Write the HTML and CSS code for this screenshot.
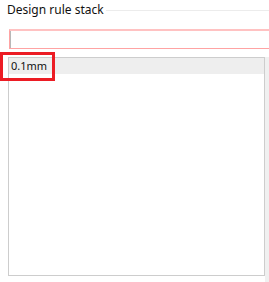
FILE: index.html
```html
<!DOCTYPE html>
<html>
<head>
<meta charset="utf-8">
<link rel="stylesheet" href="styles.css">
</head>
<body>
<div class="group">
  <div class="legend"><span class="title">Design rule stack</span><span class="rule"></span></div>
  <div class="field-wrap"><input class="field" type="text"></div>
  <div class="list-wrap">
    <div class="list">
      <div class="item">0.1mm</div>
    </div>
    <div class="scroll"></div>
  </div>
  <div class="highlight"></div>
</div>
</body>
</html>
```
FILE: styles.css
```css
html, body {
  margin: 0;
  padding: 0;
  background: #ffffff;
  overflow: hidden;
}
.group {
  position: relative;
  width: 269px;
  height: 282px;
  overflow: hidden;
  font-family: "Segoe UI", "Noto Sans", "Open Sans", sans-serif;
  color: #111111;
}
.legend {
  display: flex;
  align-items: center;
  height: 20px;
}
.title {
  padding-left: 7px;
  padding-right: 2px;
  font-size: 12px;
  line-height: 20px;
  white-space: nowrap;
}
.rule {
  flex: 1;
  border-top: 1px solid #ececec;
}
.field-wrap {
  margin-top: 9px;
  padding-left: 9px;
  overflow: hidden;
}
.field {
  display: block;
  box-sizing: border-box;
  width: calc(100% + 4px);
  height: 20px;
  padding: 0;
  border: 1px solid #ffa3a3;
  border-top: 2px solid #ffc2c2;
  box-shadow: inset 1px 0 0 #b8b8b8;
  background: #ffffff;
  outline: none;
}
.list-wrap {
  display: flex;
  margin-top: 8px;
}
.list {
  box-sizing: border-box;
  margin-left: 8px;
  width: 257px;
  height: 219px;
  border: 1px solid #cdcdcd;
  background: #ffffff;
}
.item {
  height: 16px;
  padding-left: 2px;
  background: #eeeeee;
  font-size: 11px;
  line-height: 16px;
}
.scroll {
  width: 4px;
  height: 225px;
  background: #f0f0f0;
}
.highlight {
  position: absolute;
  left: 0;
  top: 52px;
  width: 55px;
  height: 29px;
  box-sizing: border-box;
  border: 3px solid #ec1c24;
}
```
